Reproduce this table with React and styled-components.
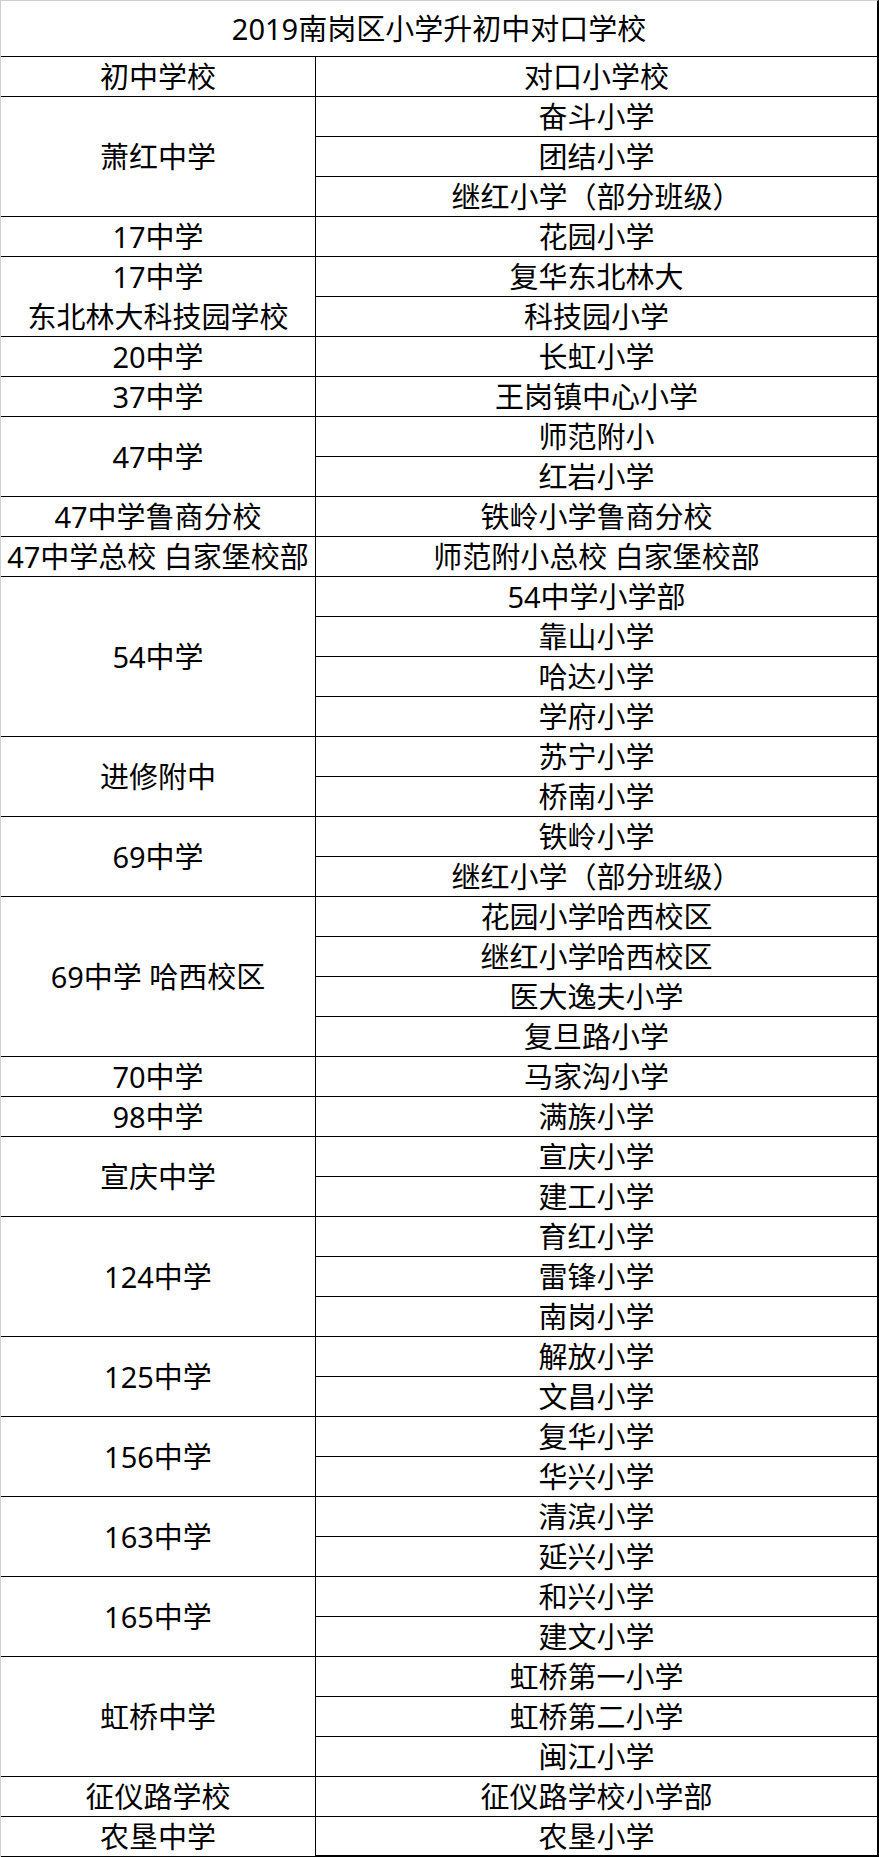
import React from "react";
import styled, { createGlobalStyle } from "styled-components";

const GlobalStyle = createGlobalStyle`
  html, body {
    margin: 0;
    padding: 0;
    background: #ffffff;
  }
  * { box-sizing: border-box; }
`;

const Table = styled.div`
  width: 879px;
  display: flex;
  flex-direction: column;
  border-top: 1px solid #cfcfcf;
  border-left: 1px solid #cfcfcf;
  border-right: 2px solid #000;
  font-family: "Noto Sans", "Noto Sans CJK SC", sans-serif;
  font-size: 29px;
  line-height: 39px;
  color: #000;
  background: #fff;
`;

const Title = styled.div`
  height: 56px;
  border-bottom: 1px solid #000;
  display: flex;
  align-items: center;
  justify-content: center;
  white-space: nowrap;
`;

const Group = styled.div`
  display: grid;
  grid-template-columns: 315px 1fr;
`;

const LeftCell = styled.div`
  border-right: 1px solid #000;
  border-bottom: ${(p) => (p.$last ? "2px" : "1px")} solid #000;
  display: flex;
  flex-direction: column;
  align-items: center;
  justify-content: center;
  gap: 1px;
  white-space: nowrap;
  min-height: 0;
`;

const RightColumn = styled.div`
  display: flex;
  flex-direction: column;
`;

const RightCell = styled.div`
  height: 40px;
  border-bottom: ${(p) => (p.$last ? "2px" : "1px")} solid #000;
  display: flex;
  align-items: center;
  justify-content: center;
  white-space: nowrap;
`;

const groups = [
  { left: ["初中学校"], right: ["对口小学校"] },
  { left: ["萧红中学"], right: ["奋斗小学", "团结小学", "继红小学（部分班级）"] },
  { left: ["17中学"], right: ["花园小学"] },
  { left: ["17中学", "东北林大科技园学校"], right: ["复华东北林大", "科技园小学"] },
  { left: ["20中学"], right: ["长虹小学"] },
  { left: ["37中学"], right: ["王岗镇中心小学"] },
  { left: ["47中学"], right: ["师范附小", "红岩小学"] },
  { left: ["47中学鲁商分校"], right: ["铁岭小学鲁商分校"] },
  { left: ["47中学总校 白家堡校部"], right: ["师范附小总校 白家堡校部"] },
  { left: ["54中学"], right: ["54中学小学部", "靠山小学", "哈达小学", "学府小学"] },
  { left: ["进修附中"], right: ["苏宁小学", "桥南小学"] },
  { left: ["69中学"], right: ["铁岭小学", "继红小学（部分班级）"] },
  {
    left: ["69中学 哈西校区"],
    right: ["花园小学哈西校区", "继红小学哈西校区", "医大逸夫小学", "复旦路小学"],
  },
  { left: ["70中学"], right: ["马家沟小学"] },
  { left: ["98中学"], right: ["满族小学"] },
  { left: ["宣庆中学"], right: ["宣庆小学", "建工小学"] },
  { left: ["124中学"], right: ["育红小学", "雷锋小学", "南岗小学"] },
  { left: ["125中学"], right: ["解放小学", "文昌小学"] },
  { left: ["156中学"], right: ["复华小学", "华兴小学"] },
  { left: ["163中学"], right: ["清滨小学", "延兴小学"] },
  { left: ["165中学"], right: ["和兴小学", "建文小学"] },
  { left: ["虹桥中学"], right: ["虹桥第一小学", "虹桥第二小学", "闽江小学"] },
  { left: ["征仪路学校"], right: ["征仪路学校小学部"] },
  { left: ["农垦中学"], right: ["农垦小学"] },
];

export default function App() {
  return (
    <>
      <GlobalStyle />
      <Table>
        <Title>2019南岗区小学升初中对口学校</Title>
        {groups.map((g, gi) => {
          const lastGroup = gi === groups.length - 1;
          return (
            <Group key={gi}>
              <LeftCell $last={lastGroup}>
                {g.left.map((t, i) => (
                  <span key={i}>{t}</span>
                ))}
              </LeftCell>
              <RightColumn>
                {g.right.map((t, i) => (
                  <RightCell key={i} $last={lastGroup && i === g.right.length - 1}>
                    {t}
                  </RightCell>
                ))}
              </RightColumn>
            </Group>
          );
        })}
      </Table>
    </>
  );
}
